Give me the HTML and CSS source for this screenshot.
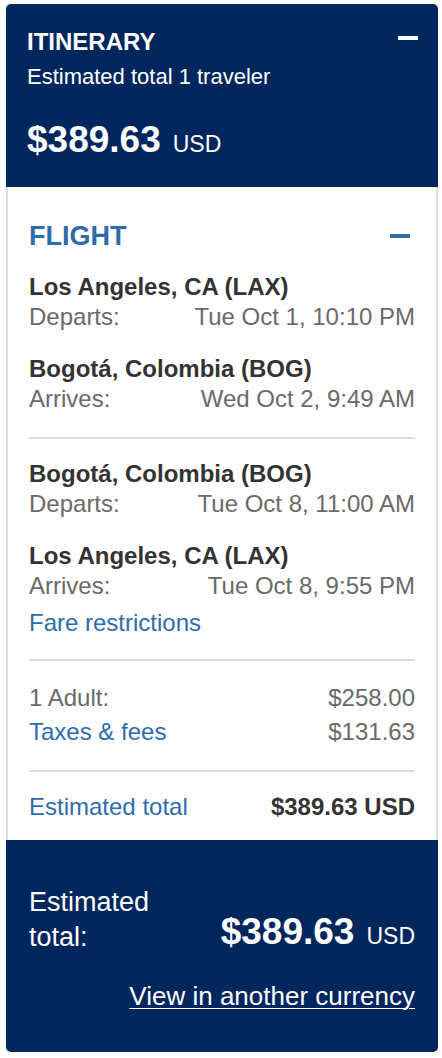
FILE: index.html
```html
<!DOCTYPE html>
<html lang="en">
<head>
<meta charset="utf-8">
<title>Itinerary</title>
<link rel="stylesheet" href="styles.css">
</head>
<body>
<div class="card">
  <header class="head">
    <div class="head-row">
      <h1 class="head-title">ITINERARY</h1>
      <span class="minus minus-white"></span>
    </div>
    <div class="head-sub">Estimated total 1 traveler</div>
    <div class="head-price"><span class="amount">$389.63</span><span class="cur">USD</span></div>
  </header>

  <section class="body">
    <div class="flight-row">
      <h2 class="flight-title">FLIGHT</h2>
      <span class="minus minus-blue"></span>
    </div>

    <div class="leg leg-first">
      <div class="stop">
        <div class="city">Los Angeles, CA (LAX)</div>
        <div class="line"><span>Departs:</span><span>Tue Oct 1, 10:10 PM</span></div>
      </div>
      <div class="stop stop-next">
        <div class="city">Bogotá, Colombia (BOG)</div>
        <div class="line"><span>Arrives:</span><span>Wed Oct 2, 9:49 AM</span></div>
      </div>
    </div>

    <div class="divider divider-a"></div>

    <div class="leg leg-second">
      <div class="stop">
        <div class="city">Bogotá, Colombia (BOG)</div>
        <div class="line"><span>Departs:</span><span>Tue Oct 8, 11:00 AM</span></div>
      </div>
      <div class="stop stop-next">
        <div class="city">Los Angeles, CA (LAX)</div>
        <div class="line"><span>Arrives:</span><span>Tue Oct 8, 9:55 PM</span></div>
      </div>
      <a class="link fare" href="#">Fare restrictions</a>
    </div>

    <div class="divider divider-b"></div>

    <div class="prices">
      <div class="line"><span>1 Adult:</span><span>$258.00</span></div>
      <div class="line line-taxes"><a class="link" href="#">Taxes &amp; fees</a><span>$131.63</span></div>
    </div>

    <div class="divider divider-c"></div>

    <div class="total-row">
      <a class="link" href="#">Estimated total</a>
      <span class="total-val">$389.63 USD</span>
    </div>
  </section>

  <footer class="foot">
    <div class="foot-row">
      <div class="foot-label">Estimated total:</div>
      <div class="foot-price"><span class="amount">$389.63</span><span class="cur">USD</span></div>
    </div>
    <div class="foot-link-row">
      <a class="foot-link" href="#">View in another currency</a>
    </div>
  </footer>
</div>
</body>
</html>
```
FILE: styles.css
```css
* { box-sizing: border-box; }

html, body {
  margin: 0;
  padding: 0;
  background: #ffffff;
}

body {
  font-family: "Liberation Sans", Arial, Helvetica, sans-serif;
  color: #333333;
}

.card {
  margin: 4px 4px 6px 6px;
  width: 432px;
}

/* header */
.head {
  background: #00265e;
  color: #ffffff;
  border-radius: 5px 5px 0 0;
  padding: 24px 20px 25px 21px;
}

.head-row {
  display: flex;
  justify-content: space-between;
  align-items: flex-start;
}

.head-title {
  margin: 0;
  font-size: 24px;
  line-height: 28px;
  font-weight: bold;
}

.minus {
  display: block;
  width: 20px;
  height: 4px;
}

.minus-white {
  background: #ffffff;
  margin-top: 8px;
}

.minus-blue {
  background: #2e6cae;
  margin-top: 15px;
  margin-right: 5px;
}

.head-sub {
  margin-top: 7px;
  font-size: 22px;
  line-height: 28px;
}

.head-price {
  margin-top: 27px;
  font-size: 37px;
  line-height: 44px;
  height: 44px;
  white-space: nowrap;
}

.amount {
  font-size: 37px;
  font-weight: bold;
}

.cur {
  font-size: 23px;
  margin-left: 12px;
}

/* body */
.body {
  border-left: 2px solid #dddddd;
  border-right: 2px solid #dddddd;
  padding: 32px 21px 18px 21px;
  font-size: 24px;
  line-height: 30px;
}

.flight-row {
  display: flex;
  justify-content: space-between;
  align-items: flex-start;
}

.flight-title {
  margin: 0;
  font-size: 27px;
  line-height: 34px;
  font-weight: bold;
  color: #2e6cae;
}

.leg-first {
  margin-top: 19px;
}

.leg-second {
  margin-top: 20px;
  display: flex;
  flex-direction: column;
  align-items: flex-start;
}

.leg-second .stop {
  align-self: stretch;
}

.stop-next {
  margin-top: 22px;
}

.city {
  font-weight: bold;
  color: #333333;
}

.line {
  display: flex;
  justify-content: space-between;
  color: #6a6a6a;
}

.divider {
  height: 2px;
  background: #dddddd;
}

.divider-a { margin-top: 23px; }
.divider-b { margin-top: 21px; }
.divider-c { margin-top: 23px; }

.link {
  color: #2e6cae;
  text-decoration: none;
}

.fare {
  margin-top: 7px;
}

.prices {
  margin-top: 22px;
}

.line-taxes {
  margin-top: 4px;
}

.total-row {
  margin-top: 20px;
  display: flex;
  justify-content: space-between;
}

.total-val {
  font-weight: bold;
  color: #333333;
}

/* footer */
.foot {
  background: #00265e;
  color: #ffffff;
  border-radius: 0 0 5px 5px;
  padding: 45px 23px 40px 23px;
}

.foot-row {
  display: flex;
  justify-content: space-between;
  align-items: flex-start;
}

.foot-label {
  width: 140px;
  font-size: 27px;
  line-height: 35px;
}

.foot-price {
  margin-top: 25px;
  font-size: 37px;
  line-height: 44px;
  height: 44px;
  white-space: nowrap;
}

.foot-price .cur {
  font-size: 23px;
}

.foot-link-row {
  margin-top: 25px;
  display: flex;
  justify-content: flex-end;
}

.foot-link {
  color: #ffffff;
  font-size: 26px;
  line-height: 32px;
  text-decoration: underline;
  text-decoration-thickness: 1px;
  text-underline-offset: 3px;
}
```
